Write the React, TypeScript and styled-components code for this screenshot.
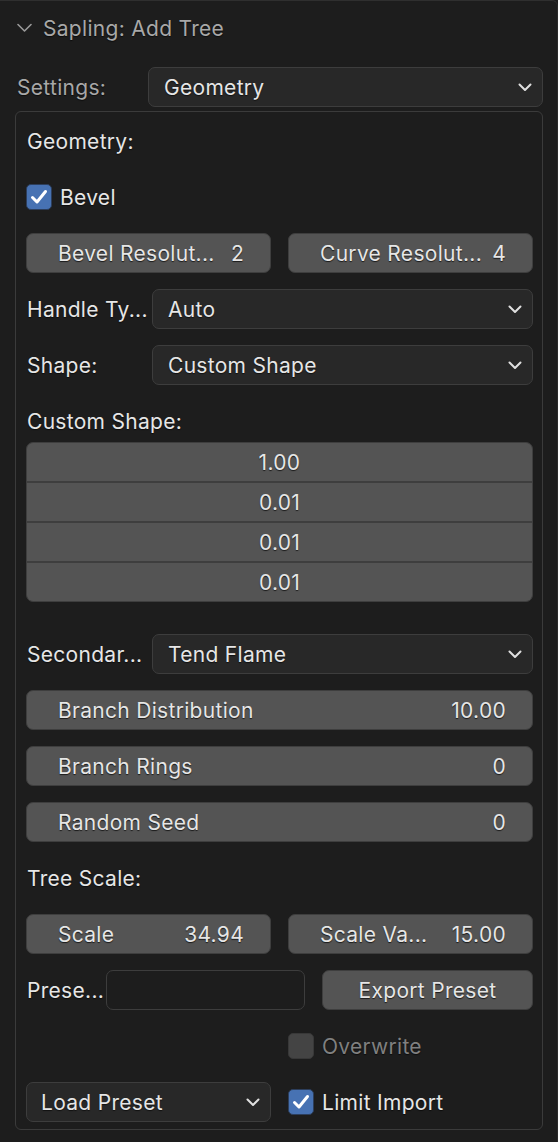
import React from "react";
import styled, { createGlobalStyle } from "styled-components";

const Global = createGlobalStyle`
  html, body { margin: 0; padding: 0; background: #1d1d1d; }
  body { font-family: Inter, "Noto Sans", sans-serif; font-size: 21px; letter-spacing: 0.3px; color: #e6e6e6; }
  * { box-sizing: border-box; }
`;

const Panel = styled.div`
  width: 558px;
  height: 1142px;
  background: #1d1d1d;
  border-top: 1px solid #2f2f2f;
  border-right: 1px solid #2a2a2a;
  border-top-right-radius: 6px;
  padding: 0 14px 0 15px;
  display: flex;
  flex-direction: column;
`;

const Header = styled.div`
  height: 54px;
  display: flex;
  align-items: center;
  gap: 11px;
  padding-left: 2px;
  color: #a8a8a8;
  text-shadow: 0 1px 1px rgba(0, 0, 0, 0.6);
`;

const SettingsRow = styled.div`
  margin-top: 12px;
  height: 40px;
  display: grid;
  grid-template-columns: 133px 1fr;
  align-items: center;
`;

const DimLabel = styled.span`
  color: #a8a8a8;
  padding-left: 2px;
  text-shadow: 0 1px 1px rgba(0, 0, 0, 0.6);
`;

const Box = styled.div`
  margin-top: 4px;
  border: 1px solid #3b3b3b;
  border-radius: 6px;
  padding: 9px 9px 7px 10px;
  display: flex;
  flex-direction: column;
  gap: 16px;
`;

const Row = styled.div<{ $cols?: string; $gap?: number; $mt?: number }>`
  height: 40px;
  display: grid;
  grid-template-columns: ${(p) => p.$cols || "1fr"};
  column-gap: ${(p) => p.$gap ?? 0}px;
  align-items: center;
  margin-top: ${(p) => p.$mt ?? 0}px;
`;

const Label = styled.span`
  color: #e6e6e6;
  padding-left: 1px;
  white-space: nowrap;
  text-shadow: 0 1px 1px rgba(0, 0, 0, 0.6);
`;

const Dropdown = styled.div<{ $pad?: number }>`
  height: 40px;
  background: #282828;
  border: 1px solid #3d3d3d;
  border-radius: 7px;
  display: flex;
  align-items: center;
  justify-content: space-between;
  padding: 0 10px 0 ${(p) => p.$pad ?? 15}px;
  color: #e6e6e6;
  text-shadow: 0 1px 1px rgba(0, 0, 0, 0.6);
`;

const NumField = styled.div`
  height: 40px;
  background: #545454;
  border: 1px solid #3e3e3e;
  border-radius: 7px;
  display: flex;
  align-items: center;
  justify-content: space-between;
  padding: 0 26px 0 31px;
  color: #e6e6e6;
  white-space: nowrap;
  text-shadow: 0 1px 1px rgba(0, 0, 0, 0.7);
`;

const Column = styled.div`
  margin-top: -15px;
  border: 1px solid #3e3e3e;
  border-radius: 7px;
  overflow: hidden;
  display: flex;
  flex-direction: column;
  gap: 2px;
  background: #3e3e3e;
`;

const ColCell = styled.div`
  height: 38px;
  background: #545454;
  display: flex;
  align-items: center;
  justify-content: center;
  color: #e6e6e6;
  text-shadow: 0 1px 1px rgba(0, 0, 0, 0.7);
`;

const TextInput = styled.div`
  height: 40px;
  background: #1d1d1d;
  border: 1px solid #3d3d3d;
  border-radius: 7px;
`;

const ButtonCell = styled.div`
  padding-left: 17px;
`;

const Button = styled.div`
  height: 40px;
  background: #545454;
  border: 1px solid #3e3e3e;
  border-radius: 7px;
  display: flex;
  align-items: center;
  justify-content: center;
  color: #e6e6e6;
  text-shadow: 0 1px 1px rgba(0, 0, 0, 0.7);
`;

const CheckWrap = styled.div<{ $disabled?: boolean }>`
  display: flex;
  align-items: center;
  gap: 8px;
  color: ${(p) => (p.$disabled ? "#808080" : "#e6e6e6")};
  text-shadow: 0 1px 1px rgba(0, 0, 0, 0.6);
`;

const CheckBox = styled.div<{ $checked?: boolean; $disabled?: boolean }>`
  width: 26px;
  height: 26px;
  border-radius: 5px;
  background: ${(p) => (p.$checked ? "#4772b3" : p.$disabled ? "#444444" : "#545454")};
  border: 1px solid ${(p) => (p.$checked ? "#2c3e5c" : "#383838")};
  display: flex;
  align-items: center;
  justify-content: center;
`;

const Chevron = () => (
  <svg width="14" height="9" viewBox="0 0 14 9">
    <path d="M1.5 1.5 L7 7 L12.5 1.5" fill="none" stroke="#e0e0e0" strokeWidth="2" strokeLinecap="round" strokeLinejoin="round" />
  </svg>
);

const HeaderChevron = () => (
  <svg width="15" height="10" viewBox="0 0 15 10">
    <path d="M1 1.5 L7.5 8 L14 1.5" fill="none" stroke="#9a9a9a" strokeWidth="1.6" strokeLinecap="round" strokeLinejoin="round" />
  </svg>
);

const Check = () => (
  <svg width="20" height="20" viewBox="0 0 20 20">
    <path d="M3.5 10.5 L8 15 L16.5 4.5" fill="none" stroke="#ffffff" strokeWidth="3" strokeLinecap="round" strokeLinejoin="round" />
  </svg>
);

const Num = ({ label, value }: { label: string; value: string }) => (
  <NumField>
    <span>{label}</span>
    <span>{value}</span>
  </NumField>
);

const Select = ({ value, pad }: { value: string; pad?: number }) => (
  <Dropdown $pad={pad}>
    <span>{value}</span>
    <Chevron />
  </Dropdown>
);

export default function App() {
  return (
    <>
      <Global />
      <Panel>
        <Header>
          <HeaderChevron />
          <span>Sapling: Add Tree</span>
        </Header>
        <SettingsRow>
          <DimLabel>Settings:</DimLabel>
          <Select value="Geometry" />
        </SettingsRow>
        <Box>
          <Row>
            <Label>Geometry:</Label>
          </Row>
          <Row>
            <CheckWrap>
              <CheckBox $checked>
                <Check />
              </CheckBox>
              <span>Bevel</span>
            </CheckWrap>
          </Row>
          <Row $cols="1fr 1fr" $gap={17}>
            <Num label="Bevel Resolut..." value="2" />
            <Num label="Curve Resolut..." value="4" />
          </Row>
          <Row $cols="126px 1fr">
            <Label>Handle Ty...</Label>
            <Select value="Auto" />
          </Row>
          <Row $cols="126px 1fr">
            <Label>Shape:</Label>
            <Select value="Custom Shape" />
          </Row>
          <Row>
            <Label>Custom Shape:</Label>
          </Row>
          <Column>
            <ColCell>1.00</ColCell>
            <ColCell>0.01</ColCell>
            <ColCell>0.01</ColCell>
            <ColCell>0.01</ColCell>
          </Column>
          <Row $cols="126px 1fr" $mt={16}>
            <Label>Secondar...</Label>
            <Select value="Tend Flame" />
          </Row>
          <Num label="Branch Distribution" value="10.00" />
          <Num label="Branch Rings" value="0" />
          <Num label="Random Seed" value="0" />
          <Row>
            <Label>Tree Scale:</Label>
          </Row>
          <Row $cols="1fr 1fr" $gap={17}>
            <Num label="Scale" value="34.94" />
            <Num label="Scale Va..." value="15.00" />
          </Row>
          <Row $cols="80px 199px 1fr">
            <Label>Prese...</Label>
            <TextInput />
            <ButtonCell>
              <Button>Export Preset</Button>
            </ButtonCell>
          </Row>
          <Row $cols="1fr 1fr" $gap={17}>
            <div />
            <CheckWrap $disabled>
              <CheckBox $disabled />
              <span>Overwrite</span>
            </CheckWrap>
          </Row>
          <Row $cols="1fr 1fr" $gap={17}>
            <Select value="Load Preset" pad={14} />
            <CheckWrap>
              <CheckBox $checked>
                <Check />
              </CheckBox>
              <span>Limit Import</span>
            </CheckWrap>
          </Row>
        </Box>
      </Panel>
    </>
  );
}
